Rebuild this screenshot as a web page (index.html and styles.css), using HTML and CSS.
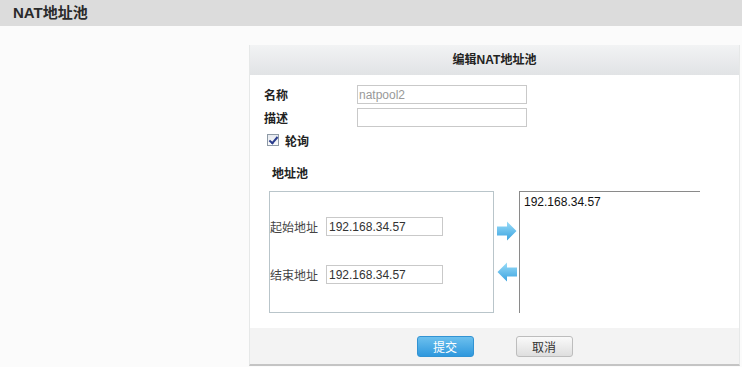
FILE: index.html
```html
<!DOCTYPE html>
<html lang="zh-CN">
<head>
    <meta charset="UTF-8">
    <title>NAT地址池</title>
    <link rel="stylesheet" href="styles.css">
</head>
<body>
    <div class="page-title">NAT地址池</div>

    <div class="content">
        <div class="panel">
            <div class="panel-head">编辑NAT地址池</div>

            <div class="panel-body">
                <div class="form-row">
                    <label class="field-label">名称</label>
                    <input type="text" class="field-input" value="natpool2" disabled>
                </div>
                <div class="form-row">
                    <label class="field-label">描述</label>
                    <input type="text" class="field-input">
                </div>
                <div class="check-row">
                    <input type="checkbox" id="roundRobin" class="check" checked>
                    <label for="roundRobin">轮询</label>
                </div>

                <div class="pool-title">地址池</div>

                <div class="pool">
                    <div class="pool-box">
                        <div class="pool-row">
                            <span class="pool-label">起始地址</span>
                            <input type="text" class="pool-input" value="192.168.34.57">
                        </div>
                        <div class="pool-row">
                            <span class="pool-label">结束地址</span>
                            <input type="text" class="pool-input" value="192.168.34.57">
                        </div>
                    </div>

                    <div class="arrows">
                        <svg width="20" height="20" viewBox="0 0 20 20">
                            <defs>
                                <linearGradient id="ar" x1="0" y1="0" x2="0" y2="1">
                                    <stop offset="0" stop-color="#9adcf8"/>
                                    <stop offset="1" stop-color="#3aa3e0"/>
                                </linearGradient>
                            </defs>
                            <path d="M0 5.5 H10 V0.5 L19.5 10 L10 19.5 V14.5 H0 Z" fill="url(#ar)"/>
                        </svg>
                        <svg width="20" height="20" viewBox="0 0 20 20">
                            <defs>
                                <linearGradient id="al" x1="0" y1="0" x2="0" y2="1">
                                    <stop offset="0" stop-color="#9adcf8"/>
                                    <stop offset="1" stop-color="#3aa3e0"/>
                                </linearGradient>
                            </defs>
                            <path d="M20 5.5 H10 V0.5 L0.5 10 L10 19.5 V14.5 H20 Z" fill="url(#al)"/>
                        </svg>
                    </div>

                    <div class="pool-list">
                        <div class="pool-item">192.168.34.57</div>
                    </div>
                </div>
            </div>

            <div class="panel-foot">
                <button class="btn btn-primary">提交</button>
                <button class="btn btn-default">取消</button>
            </div>
        </div>
    </div>
</body>
</html>
```

FILE: styles.css
```css
body {
    margin: 0;
    font-family: "Liberation Sans", "Noto Sans CJK SC", sans-serif;
    font-size: 12px;
    color: #222;
    background: #fbfbfb;
}

.page-title {
    height: 26px;
    line-height: 26px;
    padding-left: 13px;
    background: #dcdcdc;
    font-size: 15px;
    font-weight: bold;
    color: #2a2a2a;
}

.content {
    padding: 19px 2px 0 249px;
}

.panel {
    background: #fff;
    border-left: 1px solid #e6e8e8;
    border-right: 1px solid #e6e8e8;
    border-bottom: 2px solid #c4c4c4;
    height: 319px;
    display: flex;
    flex-direction: column;
}

.panel-head {
    height: 30px;
    line-height: 30px;
    text-align: center;
    font-weight: bold;
    color: #222;
    background: linear-gradient(to bottom, #f2f3f4, #e1e3e5);
}

.panel-body {
    flex: 1;
    padding: 10px 0 0 14px;
}

.form-row {
    display: flex;
    align-items: center;
    height: 19px;
    margin-bottom: 4px;
}

.field-label {
    width: 93px;
    font-weight: bold;
    color: #222;
}

.field-input {
    width: 170px;
    height: 19px;
    box-sizing: border-box;
    border: 1px solid #c9c9c9;
    padding: 0 1px;
    font-family: inherit;
    font-size: 12px;
    color: #999;
    background: #fff;
}

.check-row {
    display: flex;
    align-items: center;
    margin: 3px 0 0 3px;
    height: 18px;
}

.check {
    appearance: none;
    -webkit-appearance: none;
    position: relative;
    width: 12px;
    height: 12px;
    margin: 0 6px 0 0;
    border: 1px solid #8e9aa6;
    background: linear-gradient(to bottom, #e6e9ee, #fafbfc);
}

.check:checked::after {
    content: "";
    position: absolute;
    left: 3px;
    top: 0;
    width: 3px;
    height: 7px;
    border: solid #2a3c8c;
    border-width: 0 2px 2px 0;
    transform: rotate(40deg);
}

.check-row label {
    font-weight: bold;
}

.pool-title {
    font-weight: bold;
    margin: 18px 0 0 8px;
    height: 14px;
    line-height: 14px;
}

.pool {
    display: flex;
    margin: 10px 0 0 5px;
}

.pool-box {
    width: 225px;
    height: 122px;
    border: 1px solid #b9c5ca;
    box-sizing: border-box;
    padding-top: 25px;
}

.pool-row {
    display: flex;
    align-items: center;
    height: 19px;
    margin-bottom: 29px;
}

.pool-label {
    width: 56px;
    color: #444;
}

.pool-input {
    width: 117px;
    height: 19px;
    box-sizing: border-box;
    border: 1px solid #c9c9c9;
    padding: 0 2px;
    font-family: inherit;
    font-size: 12px;
    color: #333;
}

.arrows {
    width: 25px;
    display: flex;
    flex-direction: column;
    align-items: center;
    padding-top: 30px;
    gap: 21px;
}

.pool-list {
    width: 181px;
    height: 122px;
    box-sizing: border-box;
    border-top: 1px solid #8a8a8a;
    border-left: 1px solid #8a8a8a;
    padding: 3px 4px;
    background: #fff;
}

.pool-item {
    color: #111;
}

.panel-foot {
    height: 36px;
    background: #f3f3f3;
    display: flex;
    justify-content: center;
    align-items: center;
    gap: 42px;
}

.btn {
    width: 57px;
    height: 21px;
    border-radius: 3px;
    font-family: inherit;
    font-size: 12px;
    cursor: pointer;
}

.btn-primary {
    color: #fff;
    border: 1px solid #3293d3;
    background: linear-gradient(to bottom, #6cc0ee, #2f98dd);
}

.btn-default {
    color: #333;
    border: 1px solid #bdbdbd;
    background: linear-gradient(to bottom, #fafafa, #dedede);
}
```
